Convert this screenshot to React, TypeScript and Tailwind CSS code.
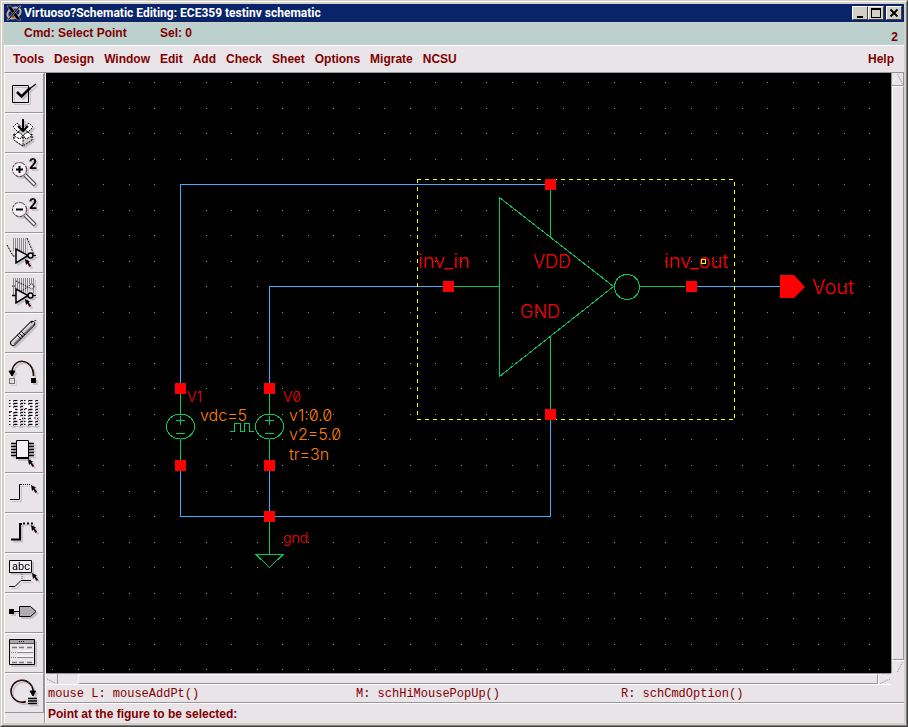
import React from 'react';

const menus = ['Tools', 'Design', 'Window', 'Edit', 'Add', 'Check', 'Sheet', 'Options', 'Migrate', 'NCSU'];

const pins = [
  [550, 184], [448, 286], [550, 414], [691, 286], [180, 388],
  [180, 465], [269, 388], [269, 465], [269, 516],
];

// One square pixel per grid point, about 25.5px apart
let gridPath = '';
for (let row = 0; row < 48; row++) {
  for (let col = 0; col < 72; col++) {
    const x = Math.floor(52.85 + col * 25.53);
    const y = Math.floor(82.85 + row * 25.51);
    gridPath += `M${x} ${y}h1v1h-1z`;
  }
}

function App() {
  return (
    <div className="min-h-screen flex flex-col bg-[#d4d0c8] border border-t-[#d4d0c8] border-l-[#d4d0c8] border-r-[#404040] border-b-[#404040] font-['Liberation_Sans',Arial,sans-serif] text-[#800000] select-none">
      <div className="flex-1 flex flex-col border border-t-white border-l-white border-r-[#808080] border-b-[#808080] p-0.5">
        <TitleBar />

        {/* Command status */}
        <div className="mt-px h-[22px] bg-[#bcd0ce] flex items-start pl-5 pr-1.5 text-xs leading-5 font-bold">
          <span className="w-[136px]">Cmd: Select Point</span>
          <span className="flex-1">Sel: 0</span>
          <span className="pt-1">2</span>
        </div>

        {/* Menu bar */}
        <nav className="h-7 bg-[#e8e4e8] border-t border-l border-white border-b border-b-[#989498] flex items-center gap-2.5 pl-2 pr-2.5 text-xs font-bold">
          {menus.map((menu) => (
            <button key={menu}>{menu}</button>
          ))}
          <button className="ml-auto">Help</button>
        </nav>

        <div className="flex-1 flex bg-[#e8e4e8]">
          <Toolbar />
          <main className="flex-1 min-w-0 flex flex-col">
            <div className="flex-1 flex">
              <Schematic />
              <VerticalScroll />
            </div>
            <HorizontalScroll />
            <div className="h-[18px] flex items-end pl-0.5 text-xs leading-4 font-['Liberation_Mono',monospace] border-b border-[#989498]">
              <span className="w-[308px]">mouse L: mouseAddPt()</span>
              <span className="w-[265px]">M: schHiMousePopUp()</span>
              <span>R: schCmdOption()</span>
            </div>
            <div className="h-5 flex items-center pl-0.5 text-xs leading-4 font-bold border-t border-white">
              Point at the figure to be selected:
            </div>
          </main>
        </div>
      </div>
    </div>
  );
}

function TitleBar() {
  const button =
    'h-3.5 w-4 flex items-center justify-center bg-[#d4d0c8] border border-t-white border-l-white border-r-[#404040] border-b-[#404040]';
  return (
    <header className="h-[18px] bg-[#0a246a] flex items-center pl-0.5 pr-0.5 text-white">
      <svg className="w-4 h-4" viewBox="0 0 16 16">
        <ellipse cx="8" cy="8" rx="7" ry="5" fill="none" stroke="#b8b0a8" strokeWidth="2" transform="rotate(-30 8 8)" />
        <path d="M3 11a5 4 0 0 0 6 1" fill="none" stroke="#d06820" strokeWidth="1.5" />
        <path d="M1 1h4l10 14h-4z" fill="#000" stroke="#aaa" strokeWidth=".6" />
        <path d="M13 1h2L3 15H1z" fill="#000" stroke="#ccc" strokeWidth=".6" />
      </svg>
      <h1 className="flex-1 pl-0.5 text-xs leading-4 font-bold font-[Roboto,sans-serif]">
        Virtuoso?Schematic Editing: ECE359 testinv schematic
      </h1>
      <button className={button} aria-label="Minimize">
        <svg className="w-3 h-3" viewBox="0 0 12 12"><path d="M3 9h6v2H3z" /></svg>
      </button>
      <button className={button} aria-label="Maximize">
        <svg className="w-3 h-3" viewBox="0 0 12 12" shapeRendering="crispEdges">
          <path d="M1 1h10v10H1zM2 3v7h8V3z" fillRule="evenodd" />
        </svg>
      </button>
      <button className={`${button} ml-0.5`} aria-label="Close">
        <svg className="w-3 h-3" viewBox="0 0 12 12"><path d="M2.5 2.5l7 7M9.5 2.5l-7 7" stroke="#000" strokeWidth="1.8" /></svg>
      </button>
    </header>
  );
}

function Schematic() {
  return (
    <div className="flex-1 relative bg-black overflow-hidden">
      <svg className="absolute inset-0 w-full h-full" fill="none">
        <g transform="translate(-46 -73)">
          <path d={gridPath} fill="#8c8ca4" shapeRendering="crispEdges" />

          {/* Wires */}
          <g stroke="#34b0ff" shapeRendering="crispEdges">
            <path d="M550.5 184.5H180.5V388M180.5 465V516.5H550.5V414M269.5 388V286.5H448M269.5 465V516M691 286.5H780" />
          </g>

          {/* Devices */}
          <g stroke="#00cc66" shapeRendering="crispEdges">
            <path d="M499.5 197.5L613.5 286.5L499.5 376.5zM550.5 190V237M550.5 336V409M454 286.5H499M640 286.5H685" />
            <circle cx="627" cy="287" r="12.5" />
            <Source x={180} />
            <Source x={269} />
            <path d="M230 431.5H234.5V423.5H240.5V431.5H244.5V423.5H249.5V431.5H254" />
            <path d="M269.5 516V554M256 554.5H283L269.5 567.5z" />
          </g>

          {/* Selection outline */}
          <path d="M417 179.5H734M417 419.5H734M417.5 179V419M734.5 182V419" stroke="#ffff00" strokeDasharray="4 4" shapeRendering="crispEdges" />

          {/* Pins */}
          <g fill="#ff0000">
            {pins.map(([x, y]) => (
              <rect key={`${x}-${y}`} x={x - 5} y={y - 5} width="11" height="11" />
            ))}
            <path d="M780 275H794L805 287L794 298H780z" />
          </g>

          <g fill="#ff0000" className="font-[Inter,sans-serif] font-light text-xl">
            <text x="418" y="268">inv_in</text>
            <text x="664" y="268">inv_out</text>
            <text x="812" y="294">Vout</text>
          </g>
          <g fill="#ff0000" className="font-[Inter,sans-serif] font-light text-lg">
            <text x="533" y="268">VDD</text>
            <text x="520" y="318">GND</text>
          </g>
          <g fill="#ff0000" className="font-[Inter,sans-serif] font-light text-sm [font-feature-settings:'zero']">
            <text x="187" y="402">V1</text>
            <text x="283" y="402">V0</text>
            <text x="283" y="543">gnd</text>
          </g>
          <g fill="#ff8000" className="font-[Inter,sans-serif] font-light text-base [font-feature-settings:'zero']">
            <text x="200" y="421">vdc=5</text>
            <text x="289" y="421">v1:0.0</text>
            <text x="289" y="440">v2=5.0</text>
            <text x="289" y="460">tr=3n</text>
          </g>

          <rect x="701.5" y="259.5" width="4" height="4" stroke="#ffff00" />
        </g>
      </svg>
    </div>
  );
}

function Source({ x }: { x: number }) {
  return (
    <g transform={`translate(${x} 0)`}>
      <ellipse cx="0.5" cy="426.5" rx="14" ry="12.5" />
      <path d="M.5 393V414M.5 439V460M-4 420.5H5M.5 416V425M-4 433.5H5" />
    </g>
  );
}

function VerticalScroll() {
  return (
    <div className="w-[13px] flex flex-col border-l border-[#989498]">
      <button className="h-[13px] border-b border-r border-[#989498]" aria-label="Scroll up">
        <svg className="w-[11px] h-3" viewBox="0 0 11 12" fill="none" strokeDasharray="1 1">
          <path d="M.5 11L5.5 1" stroke="#fff" />
          <path d="M5.5 1l5 10" stroke="#888488" />
        </svg>
      </button>
      <div className="flex-1 border border-t-white border-l-white border-r-[#989498] border-b-[#989498]" />
      <button className="h-[13px] border-t border-white" aria-label="Scroll down">
        <svg className="w-[11px] h-3" viewBox="0 0 11 12" fill="none" strokeDasharray="1 1">
          <path d="M.5 1l5 10" stroke="#fff" />
          <path d="M5.5 11l5-10" stroke="#888488" />
        </svg>
      </button>
    </div>
  );
}

function HorizontalScroll() {
  return (
    <div className="h-3 mr-[13px] flex border-t border-[#989498] border-b border-b-white">
      <button className="w-3 border-r border-[#989498]" aria-label="Scroll left">
        <svg className="w-[11px] h-2.5" viewBox="0 0 11 10" fill="none" strokeDasharray="1 1">
          <path d="M10 .5L1 5" stroke="#fff" />
          <path d="M1 5l9 4.500" stroke="#888488" />
        </svg>
      </button>
      <div className="ml-5 flex-1 border border-t-white border-l-white border-r-[#989498] border-b-[#989498]" />
      <button className="w-[13px] border-l border-white" aria-label="Scroll right">
        <svg className="w-3 h-2.5" viewBox="0 0 12 10" fill="none" strokeDasharray="1 1">
          <path d="M1 .5L11 5" stroke="#fff" />
          <path d="M11 5L1 9.500" stroke="#888488" />
        </svg>
      </button>
    </div>
  );
}

function Toolbar() {
  return (
    <aside className="w-[42px] border-l border-l-white border-r border-r-white">
      <div className="h-full border-r border-[#989498] flex flex-col">
        {tools.map(({ name, icon }) => (
          <button
            key={name}
            aria-label={name}
            className="h-10 border-t border-white border-b border-b-[#989498] border-r border-r-[#989498]"
          >
            <svg className="w-[38px] h-[38px] drop-shadow-[2px_2px_0_#c4c0c4]" viewBox="0 1 38 38" fill="none" stroke="#000">
              {icon}
            </svg>
          </button>
        ))}
      </div>
    </aside>
  );
}

function Pointer({ x, y }: { x: number; y: number }) {
  return (
    <g transform={`translate(${x} ${y})`} stroke="none">
      <path d="M0 0l5 2.500-1.500 1L6 6.500 4.500 8 2.500 4.500 1 6z" fill="#000" />
      <path d="M3.500 4.500l2 3" stroke="#a00000" strokeWidth=".7" />
    </g>
  );
}

function Lens({ plus = false }) {
  return (
    <>
      <path d="M20 22l10 10" strokeWidth="4" stroke="#444" />
      <path d="M20 22l9.500 9.500" strokeWidth="2" stroke="#eee" />
      <circle cx="14.500" cy="16.500" r="7" fill="#f4f0f4" stroke="#333" strokeDasharray="3 1" />
      <circle cx="14.500" cy="16.500" r="7" stroke="#a02020" strokeDasharray="1 6" />
      <path d={plus ? 'M11 16.500h7M14.500 13v7' : 'M11 16.500h7'} strokeWidth="2" />
      <text x="24" y="16" fill="#000" stroke="none" className="text-sm font-bold font-[Roboto,sans-serif]">2</text>
    </>
  );
}

const tools = [
  {
    name: 'Check and Save',
    icon: (
      <>
        <path d="M7.500 12.500h16v17h-16z" />
        <path d="M12 19l4.500 4.500L25 15" strokeWidth="2.500" />
        <path d="M23 17l8-6" strokeWidth="1.200" />
      </>
    ),
  },
  {
    name: 'Save',
    icon: (
      <>
        <path d="M18 25l9-4v6l-9 6-9-6v-6z" fill="#d0ccd0" strokeDasharray="2 1" />
        <path d="M9 21v6l9 6v-8z" fill="#fff" strokeDasharray="2 1" />
        <path d="M12 10l6 5-5 4-5-5zM24 10l-6 5 5 4 5-5zM13 19l5 3-3 4-6-3zM23 19l-5 3 3 4 6-3z" fill="#fff" strokeDasharray="2 1" />
        <path d="M18 6v12M13 13l5 5 5-5" strokeWidth="2" />
      </>
    ),
  },
  { name: 'Zoom In by 2', icon: <Lens plus /> },
  { name: 'Zoom Out by 2', icon: <Lens /> },
  {
    name: 'Stretch',
    icon: (
      <>
        <path d="M8.500 5v13M10.500 5v12M12.500 5v12M14.500 5v13M16.500 5v14M18.500 5v15M20.500 5v15" stroke="#888" />
        <path d="M2 12l6 11h3M22 5l7 17" strokeDasharray="2 1" />
        <path d="M11 16v14l12-7.500z" fill="#e8e4e8" strokeWidth="1.500" />
        <circle cx="25.500" cy="22.500" r="2.500" fill="#e8e4e8" strokeWidth="1.500" />
        <path d="M28 22.500h3" />
        <Pointer x={20} y={26} />
      </>
    ),
  },
  {
    name: 'Copy',
    icon: (
      <>
        <path d="M8.500 5v17M10.500 5v10M12.500 5v12M14.500 5v13M16.500 5v14M18.500 5v14M20.500 5v14M22.500 5v14M24.500 5v6M26.500 5v6M28.500 5v15" stroke="#888" />
        <path d="M11 8l12 6-12 7M7 13h4" strokeDasharray="1 1" />
        <circle cx="26.500" cy="13.500" r="2.500" strokeDasharray="1 1" />
        <path d="M11 16v14l12-7.500zM7 22.500h4" fill="#e8e4e8" strokeWidth="1.500" />
        <circle cx="25.500" cy="22.500" r="2.500" fill="#e8e4e8" strokeWidth="1.500" />
        <path d="M28 22.500h3" />
        <Pointer x={20} y={26} />
      </>
    ),
  },
  {
    name: 'Delete',
    icon: (
      <>
        <path d="M8 30L27 11" strokeWidth="6" strokeLinecap="round" />
        <path d="M8 30L27 11" strokeWidth="4" stroke="#d8d4d8" strokeLinecap="round" />
        <path d="M9 31L28 12" stroke="#777" strokeWidth="1.500" />
        <path d="M26 10l5-3-3 6" fill="#ccc" strokeDasharray="1 1" />
        <path d="M14 20l4 4M16 18l4 4M12 22l4 4" />
      </>
    ),
  },
  {
    name: 'Undo',
    icon: (
      <>
        <path d="M7 20C7 4 28.500 4 28.500 23" strokeWidth="1.500" />
        <path d="M7 20C7 4 28.500 4 28.500 23" strokeWidth="1.500" stroke="#c02020" strokeDasharray="1 4" />
        <path d="M4 18h6l-3 5z" fill="#000" />
        <path d="M4.500 25.500h5v5h-5z" strokeDasharray="1 1" />
        <path d="M26 25h5v5h-5z" fill="#000" stroke="none" />
      </>
    ),
  },
  {
    name: 'Properties',
    icon: (
      <>
        <path d="M7.500 7v26M14.500 7v26M22.500 7v26M29.500 7v26" strokeWidth="7" strokeDasharray="1 2" />
        <path d="M7 7v26M14 7v26M22 7v26M29 7v26" stroke="#f8f4f8" strokeWidth="3" />
        <path d="M8.500 7v26M15.500 7v26M23.500 7v26M30.500 7v26" stroke="#666" strokeDasharray="2 1" />
        <path d="M4 17h6M11 25h6M19 14h6M26 25h6" stroke="#fff" strokeWidth="3" />
        <path d="M4 18.500h3M14 26.500h2M20 15.500h2M29 25h2" stroke="#900" />
      </>
    ),
  },
  {
    name: 'Component',
    icon: (
      <>
        <path d="M6 10.500h6M6 13.500h6M6 16.500h6M6 19.500h6M6 22.500h6M24 10.500h5M24 13.500h5M24 16.500h5M24 19.500h5M24 22.500h5" strokeWidth="1.500" />
        <path d="M11.500 7.500h12v17h-12z" fill="#f4f0f4" />
        <path d="M11 25h13" strokeWidth="2" />
        <Pointer x={23} y={26} />
      </>
    ),
  },
  {
    name: 'Wire (narrow)',
    icon: (
      <>
        <path d="M5 26.500h9.500v-15h2" />
        <path d="M16 11.500h10" strokeDasharray="1 1" />
        <Pointer x={26} y={12} />
      </>
    ),
  },
  {
    name: 'Wire (wide)',
    icon: (
      <>
        <path d="M6 26.500h9V11h2" strokeWidth="2" />
        <path d="M18 10.500h10" strokeWidth="2" strokeDasharray="2 2" />
        <Pointer x={26} y={12} />
      </>
    ),
  },
  {
    name: 'Wire Name',
    icon: (
      <>
        <path d="M4.500 7.500h22v12h-22z" fill="#f0ecf0" />
        <text x="7" y="17" fill="#000" stroke="none" className="text-[11px] font-[Roboto,sans-serif]">abc</text>
        <path d="M17 21v6" stroke="#555" strokeDasharray="1 1" />
        <path d="M4 33.500h6l6-6h10" />
        <Pointer x={27} y={20} />
      </>
    ),
  },
  {
    name: 'Pin',
    icon: (
      <>
        <path d="M4 16h5v5H4z" fill="#000" stroke="none" />
        <path d="M9 18.500h5" />
        <path d="M14.500 13.500h11l5.500 5-5.500 5h-11z" fill="#b0acb0" />
      </>
    ),
  },
  {
    name: 'Cmd Options',
    icon: (
      <>
        <path d="M4.500 6.500h25v25h-25z" fill="#e8e4e8" />
        <path d="M5 8.500h24" stroke="#a8a4a8" strokeWidth="3" />
        <path d="M14 8.500h6" strokeDasharray="1 1" />
        <path d="M5 10.500h24" stroke="#555" />
        <path d="M7 14.500h5M14 14.500h5M22 14.500h5M7 29.500h5M14 29.500h5M22 29.500h5" stroke="#777" strokeWidth="1.500" />
        <path d="M6 19.500h5M6 24.500h5" stroke="#777" strokeDasharray="1 1" />
        <path d="M12 19.500h16M12 24.500h16" stroke="#888" />
        <path d="M12 18h16M12 23h16" stroke="#fff" />
      </>
    ),
  },
  {
    name: 'Repeat',
    icon: (
      <>
        <path d="M21 28.500A11 11 0 1 1 28 19" strokeWidth="1.500" />
        <path d="M21 28.500A11 11 0 1 1 28 19" strokeWidth="1.500" stroke="#c02020" strokeDasharray="1 4" />
        <path d="M25 18h5.500l-2.500 5z" fill="#000" />
        <path d="M23 25.500h9M23 28h9M23 30.500h9" strokeWidth="1.500" />
      </>
    ),
  },
];

export default App;
